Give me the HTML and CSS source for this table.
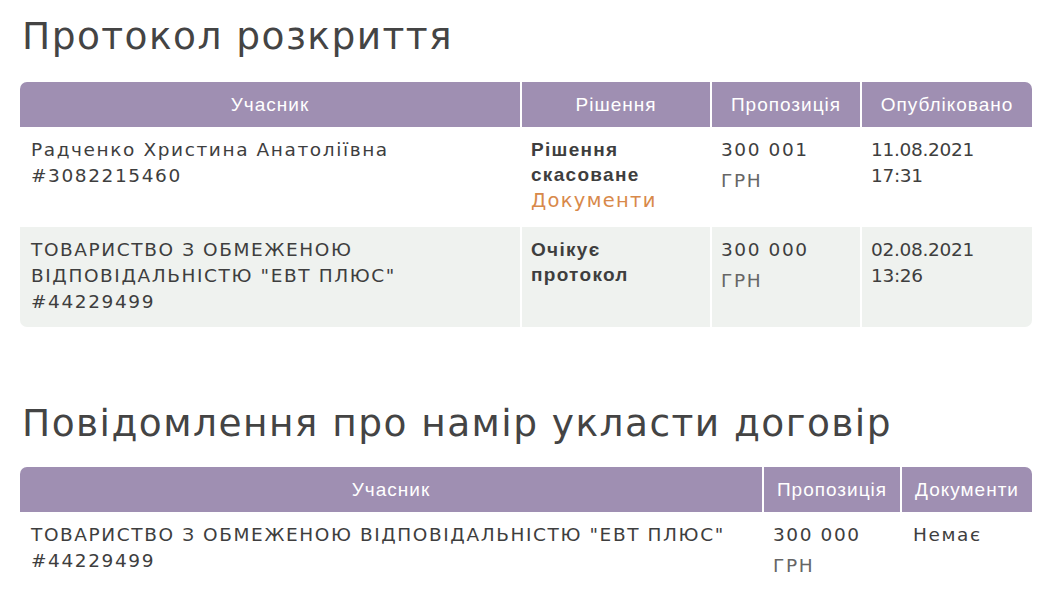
FILE: index.html
```html
<!DOCTYPE html>
<html lang="uk">
<head>
<meta charset="utf-8">
<link rel="stylesheet" href="styles.css">
</head>
<body>
<section class="block">
  <h2 class="title">Протокол розкриття</h2>
  <table class="tbl tbl-protocol">
    <colgroup>
      <col class="c-part"><col class="c-dec"><col class="c-prop"><col class="c-pub">
    </colgroup>
    <thead>
      <tr>
        <th>Учасник</th>
        <th>Рішення</th>
        <th>Пропозиція</th>
        <th>Опубліковано</th>
      </tr>
    </thead>
    <tbody>
      <tr>
        <td>Радченко Христина Анатоліївна<br>#3082215460</td>
        <td><b class="status">Рішення скасоване</b><a class="docs" href="#">Документи</a></td>
        <td><span class="amount">300 001</span><span class="cur">ГРН</span></td>
        <td class="date">11.08.2021<br>17:31</td>
      </tr>
      <tr class="alt">
        <td>ТОВАРИСТВО З ОБМЕЖЕНОЮ ВІДПОВІДАЛЬНІСТЮ "ЕВТ ПЛЮС"<br>#44229499</td>
        <td><b class="status">Очікує протокол</b></td>
        <td><span class="amount">300 000</span><span class="cur">ГРН</span></td>
        <td class="date">02.08.2021<br>13:26</td>
      </tr>
    </tbody>
  </table>
</section>
<section class="block block2">
  <h2 class="title">Повідомлення про намір укласти договір</h2>
  <table class="tbl tbl-notice">
    <colgroup>
      <col class="c-part2"><col class="c-prop2"><col class="c-docs2">
    </colgroup>
    <thead>
      <tr>
        <th>Учасник</th>
        <th>Пропозиція</th>
        <th>Документи</th>
      </tr>
    </thead>
    <tbody>
      <tr>
        <td>ТОВАРИСТВО З ОБМЕЖЕНОЮ ВІДПОВІДАЛЬНІСТЮ "ЕВТ ПЛЮС"<br>#44229499</td>
        <td><span class="amount">300 000</span><span class="cur">ГРН</span></td>
        <td class="none">Немає</td>
      </tr>
    </tbody>
  </table>
</section>
</body>
</html>
```
FILE: styles.css
```css
html, body {
  margin: 0;
  padding: 0;
  background: #fff;
}
body {
  padding: 0 13px 0 20px;
  font-family: "DejaVu Sans", "Noto Sans", sans-serif;
  color: #3e3e3e;
}
.title {
  margin: 0;
  padding: 10px 0 0 2px;
  font-size: 37.5px;
  line-height: 52px;
  font-weight: 400;
  letter-spacing: 1.45px;
  color: #444;
}
.tbl {
  width: 100%;
  table-layout: fixed;
  border-collapse: separate;
  border-spacing: 0;
  margin-top: 20px;
}
.block2 .title { padding-top: 0; }
.block2 { margin-top: 70px; }
.block2 .tbl { margin-top: 18px; }
.tbl th {
  background: #9f8fb2;
  color: #fff;
  font-family: "Liberation Sans", Arial, sans-serif;
  font-weight: 400;
  font-size: 19px;
  letter-spacing: 1px;
  height: 45px;
  padding: 0 2px;
  text-align: center;
  border-left: 2px solid #fff;
  white-space: nowrap;
}
.tbl th:first-child { border-left: none; border-top-left-radius: 7px; }
.tbl th:last-child { border-top-right-radius: 7px; }
.tbl td {
  vertical-align: top;
  padding: 10px 8px 12px 9px;
  font-size: 18.5px;
  line-height: 26px;
  border-left: 2px solid #fff;
  letter-spacing: 1.6px;
}
.tbl td:first-child { border-left: none; padding-left: 11px; }
.tbl td.date { letter-spacing: -0.3px; }
.tbl td.none { padding-left: 11px; }
.tbl-protocol tbody tr:first-child td { height: 78px; }
.tbl-protocol tbody tr.alt td { height: 75px; }
tr.alt td { background: #eff2ef; }
tr.alt td:first-child { border-bottom-left-radius: 7px; }
tr.alt td:last-child { border-bottom-right-radius: 7px; }
.c-part { width: 500px; }
.c-dec { width: 190px; }
.c-prop { width: 150px; }
.c-pub { width: 172px; }
.c-part2 { width: 742px; }
.c-prop2 { width: 138px; }
.status {
  display: block;
  font-family: "Liberation Sans", Arial, sans-serif;
  font-weight: 700;
  font-size: 19px;
  line-height: 25px;
  color: #3e3e3e;
  letter-spacing: 1.3px;
}
.docs {
  display: block;
  margin-top: 1px;
  color: #d8894a;
  text-decoration: none;
  font-size: 19.5px;
  line-height: 26px;
  letter-spacing: 1.3px;
}
.amount { display: block; }
.cur {
  display: block;
  margin-top: 5px;
  color: #666;
  font-size: 18.5px;
}
.tbl-notice td { padding-top: 10px; }
```
